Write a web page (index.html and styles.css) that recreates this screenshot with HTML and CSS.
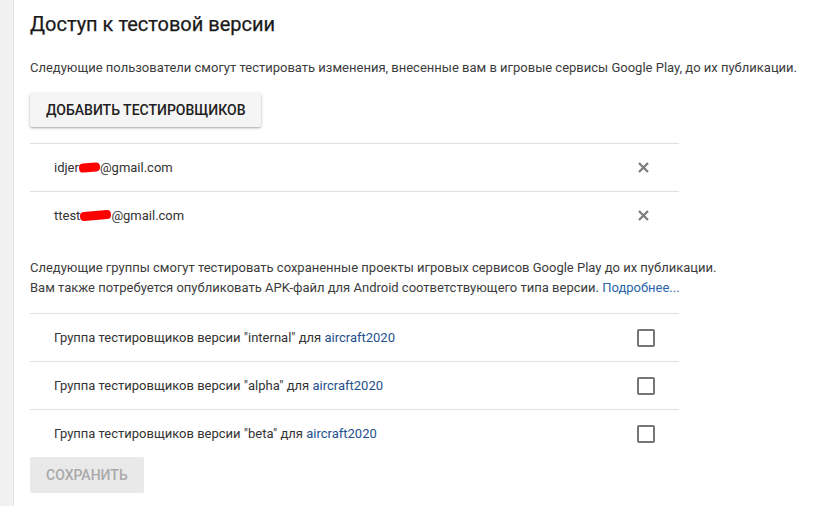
FILE: index.html
```html
<!DOCTYPE html>
<html lang="ru">
<head>
<meta charset="utf-8">
<title>Доступ к тестовой версии</title>
<link rel="stylesheet" href="styles.css">
</head>
<body>
<div class="page">
  <aside class="rail"></aside>
  <main class="content">
    <h1 class="title">Доступ к тестовой версии</h1>
    <p class="text">Следующие пользователи смогут тестировать изменения, внесенные вам в игровые сервисы Google Play, до их публикации.</p>
    <button class="btn-raised" type="button">Добавить тестировщиков</button>
    <ul class="list">
      <li class="row">
        <span class="email">idjer<span class="redact r1"></span>@gmail.com</span>
        <span class="remove"><svg width="11" height="11" viewBox="0 0 11 11"><path d="M1 1L10 10M10 1L1 10" stroke="#7a7a7a" stroke-width="2.2"/></svg></span>
      </li>
      <li class="row">
        <span class="email">ttest<span class="redact r2"></span>@gmail.com</span>
        <span class="remove"><svg width="11" height="11" viewBox="0 0 11 11"><path d="M1 1L10 10M10 1L1 10" stroke="#7a7a7a" stroke-width="2.2"/></svg></span>
      </li>
    </ul>
    <p class="text text2">Следующие группы смогут тестировать сохраненные проекты игровых сервисов Google Play до их публикации.<br>Вам также потребуется опубликовать APK-файл для Android соответствующего типа версии. <a class="more" href="#">Подробнее...</a></p>
    <ul class="list groups">
      <li class="row"><span class="label">Группа тестировщиков версии "internal" для <span class="app">aircraft2020</span></span><span class="check"></span></li>
      <li class="row"><span class="label">Группа тестировщиков версии "alpha" для <span class="app">aircraft2020</span></span><span class="check"></span></li>
      <li class="row"><span class="label">Группа тестировщиков версии "beta" для <span class="app">aircraft2020</span></span><span class="check"></span></li>
    </ul>
    <button class="btn-disabled" type="button" disabled>Сохранить</button>
  </main>
</div>
</body>
</html>
```

FILE: styles.css
```css
* { box-sizing: border-box; }
html, body { margin: 0; padding: 0; background: #fff; }
body {
  font-family: Roboto, "Liberation Sans", Arial, sans-serif;
  color: #333;
  width: 835px;
  height: 506px;
  overflow: hidden;
}
.page {
  display: flex;
  min-height: 506px;
}
.rail {
  width: 14px;
  flex: none;
  background: #f1f1f1;
  border-right: 1px solid #e4e4e4;
}
.content {
  flex: 1;
  padding: 0 0 0 16px;
}
.title {
  margin: 10px 0 0;
  font-size: 20px;
  line-height: 28px;
  font-weight: 400;
  color: #1a1a1a;
  -webkit-text-stroke: 0.25px #1a1a1a;
}
.text {
  margin: 20px 0 0;
  font-size: 13px;
  line-height: 20px;
  color: #3c3c3c;
}
.btn-raised {
  display: block;
  margin-top: 15px;
  height: 34px;
  padding: 0 16px;
  border: none;
  border-radius: 2px;
  background: #f5f5f5;
  box-shadow: 0 1px 3px rgba(0,0,0,0.3), 0 1px 1px rgba(0,0,0,0.08);
  font-family: inherit;
  font-size: 14px;
  font-weight: 500;
  color: #212121;
  text-transform: uppercase;
}
.list {
  list-style: none;
  margin: 16px 0 0;
  padding: 0;
  width: 649px;
}
.row {
  display: flex;
  align-items: center;
  justify-content: space-between;
  height: 48px;
  border-top: 1px solid #e0e0e0;
  padding: 0 24px;
  font-size: 13px;
  color: #333;
}
.email { display: inline-flex; align-items: center; }
.redact {
  display: inline-block;
  height: 9px;
  background: #ff0000;
  border-radius: 4px;
  transform: rotate(-5deg);
}
.r1 { width: 21px; }
.r2 { width: 31px; }
.remove {
  width: 11px;
  height: 11px;
  margin-right: 6px;
  display: flex;
}
.text2 { margin-top: 19px; }
.more { color: #2a64ab; text-decoration: none; }
.groups { margin-top: 15px; }
.app { color: #24508d; }
.check {
  width: 18px;
  height: 18px;
  border: 2px solid #757575;
  border-radius: 2px;
}
.btn-disabled {
  display: block;
  height: 36px;
  padding: 0 16px;
  border: none;
  border-radius: 2px;
  background: #e9e9e9;
  font-family: inherit;
  font-size: 14px;
  font-weight: 500;
  color: #a9a9a9;
  text-transform: uppercase;
}
```
